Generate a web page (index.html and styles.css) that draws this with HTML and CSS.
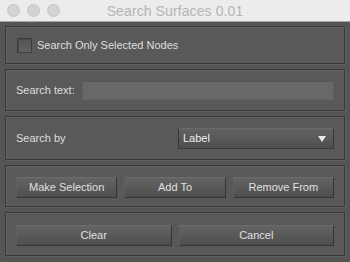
FILE: index.html
```html
<!DOCTYPE html>
<html lang="en">
<head>
  <meta charset="UTF-8" />
  <title>Search Surfaces 0.01</title>
  <link rel="stylesheet" href="styles.css">
</head>
<body>
  <div class="window">
    <div class="titlebar">
      <div class="lights">
        <span class="light"></span>
        <span class="light"></span>
        <span class="light"></span>
      </div>
      <div class="title">Search Surfaces 0.01</div>
    </div>

    <div class="content">
      <div class="panel panel-check">
        <span class="checkbox"></span>
        <span class="label">Search Only Selected Nodes</span>
      </div>

      <div class="panel panel-text">
        <span class="label">Search text:</span>
        <input class="text-input" type="text" />
      </div>

      <div class="panel panel-by">
        <span class="label">Search by</span>
        <div class="dropdown">
          <span>Label</span>
          <span class="arrow"></span>
        </div>
      </div>

      <div class="panel panel-buttons three">
        <button class="btn">Make Selection</button>
        <button class="btn">Add To</button>
        <button class="btn">Remove From</button>
      </div>

      <div class="panel panel-buttons two">
        <button class="btn">Clear</button>
        <button class="btn">Cancel</button>
      </div>
    </div>
  </div>
</body>
</html>
```

FILE: styles.css
```css
* {
  margin: 0;
  padding: 0;
  box-sizing: border-box;
  font-family: 'Liberation Sans', Arial, sans-serif;
}

body {
  width: 350px;
  height: 262px;
  overflow: hidden;
  background: #575757;
}

.window {
  display: flex;
  flex-direction: column;
  height: 262px;
}

.titlebar {
  position: relative;
  height: 22px;
  background: #ececec;
  border-bottom: 1px solid #a8a8a8;
  display: flex;
  align-items: center;
  justify-content: center;
}

.lights {
  position: absolute;
  left: 7px;
  top: 4px;
  display: flex;
  gap: 7px;
}

.light {
  width: 13px;
  height: 13px;
  border-radius: 50%;
  background: #d3d3d3;
  border: 1px solid #c6c6c6;
}

.title {
  font-size: 14px;
  color: #b4b4b4;
  letter-spacing: 0.1px;
}

.content {
  flex: 1;
  display: flex;
  flex-direction: column;
  gap: 5px;
  padding: 4px 5px 5px;
  background: #555555;
}

.panel {
  display: flex;
  align-items: center;
  padding: 0 10px;
  border: 1px solid #393939;
  box-shadow: inset 1px 1px 0 #626262, 1px 1px 0 #606060;
  background: #595959;
  color: #dedede;
  font-size: 11px;
}

.panel-check { height: 38px; padding-left: 11px; }
.panel-text { height: 42px; }
.panel-by { height: 44px; }
.panel-buttons { height: 42px; padding-top: 2px; }
.panel-buttons.two { height: 44px; }

.checkbox {
  width: 15px;
  height: 15px;
  border: 1px solid #3d3d3d;
  background: linear-gradient(#545454, #626262);
  box-shadow: inset 1px 1px 0 #4a4a4a;
  margin-right: 5px;
}

.panel-text .label {
  width: 66px;
}

.text-input {
  flex: 1;
  height: 19px;
  margin-top: 1px;
  background: #686868;
  border: 1px solid #5f5f5f;
  border-top-color: #555;
  outline: none;
}

.panel-by .label {
  width: 162px;
}

.dropdown {
  flex: 1;
  height: 21px;
  display: flex;
  align-items: center;
  justify-content: space-between;
  padding: 0 7px 0 4px;
  border: 1px solid #383838;
  border-top-color: #6a6a6a;
  background: linear-gradient(#626262, #4f4f4f);
  color: #f0f0f0;
  font-size: 11px;
}

.arrow {
  width: 0;
  height: 0;
  border-left: 4px solid transparent;
  border-right: 4px solid transparent;
  border-top: 6px solid #e8e8e8;
  margin-top: 1px;
}

.panel-buttons {
  gap: 7px;
}

.btn {
  flex: 1;
  height: 21px;
  border: 1px solid #353535;
  border-top-color: #6c6c6c;
  border-left-color: #5e5e5e;
  background: linear-gradient(#646464, #4e4e4e);
  color: #e0e0e0;
  font-size: 11px;
}
```
